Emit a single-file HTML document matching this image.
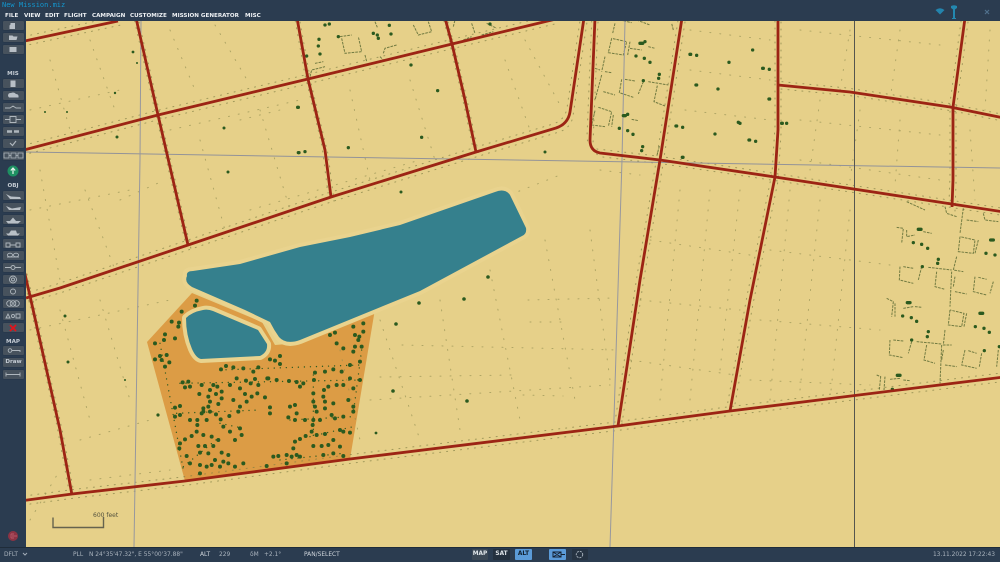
<!DOCTYPE html>
<html><head><meta charset="utf-8"><title>New Mission.miz</title>
<style>
html,body{margin:0;padding:0;width:1000px;height:562px;overflow:hidden;background:#e6d089}
body{position:relative;font-family:"DejaVu Sans","Liberation Sans",sans-serif}
#map{position:absolute;left:0;top:0}
.bar{position:absolute;background:#2b3c50}
.t{position:absolute;white-space:nowrap;line-height:8px}
.m{top:12px;font-size:5.6px;font-weight:bold;color:#eef1f4}
.s{top:551px;font-size:5.9px;color:#aab3bd}
.b{position:absolute;left:3px;width:21px;height:9px;background:#47525d;border-radius:1px;box-shadow:0 0 1px #1f2c3a}
.l{position:absolute;left:0;width:26px;text-align:center;font-size:5.6px;font-weight:bold;color:#c5ccd4;line-height:8px}
.g{position:absolute;top:549px;height:11px;border-radius:1px;font-size:5.8px;font-weight:bold;color:#dfe4e8;text-align:center;line-height:11px;background:#3b4855}
</style></head><body>
<svg id="map" width="1000" height="562" viewBox="0 0 1000 562">
<defs>
<g id="roads" fill="none">
<path d="M20 42L118 21"/>
<path d="M136 18L158 115L188 245"/>
<path d="M20 151L158 115L308 79L452 44L556 19"/>
<path d="M297 18L308 79L325 150L331 197"/>
<path d="M445 18L452 44L465 100L476 152"/>
<path d="M26 298L60 288L188 245L331 197L476 152L556 128Q568 124 570 112L584 18"/>
<path d="M24 270L30 296L60 430L72 495"/>
<path d="M20 501L72 494L185 481L350 459L618 426L730 411L1004 377"/>
<path d="M595 18L590 140Q590 151 600 153L660 160L775 177L1004 212"/>
<path d="M682 18L660 160L640 280L618 426"/>
<path d="M778 18L778 130L775 177L750 300L730 411"/>
<path d="M778 85L850 92L950 107L1004 118"/>
<path d="M965 18L953 107L953 180L952 207"/>
</g>
</defs>
<rect width="1000" height="562" fill="#e6d089"/>
<path d="M192 293L147 342L185 481L350 459L375 309L300 343L275 345L262 322Z" fill="#dc9c45"/>
<!-- roadside dots -->
<g stroke="#7b7b42" stroke-width="1" stroke-dasharray="1 6" stroke-linecap="round" opacity=".65">
<use href="#roads" transform="translate(-3,-4)"/>
<use href="#roads" transform="translate(3,4)"/>
</g>
<!-- scattered dotted lanes -->
<g fill="none" stroke="#8b8a4e" stroke-width="1" stroke-dasharray="1 9" stroke-linecap="round" opacity=".6">
<path d="M50 60L70 130M90 40L115 110M170 30L195 90M215 25L250 85M40 170L60 280M85 190L115 270M120 200L165 180M200 140L225 230M260 110L290 210M350 90L370 180M410 80L435 160M505 60L530 130M525 40L560 105"/>
<path d="M60 310L90 420M100 300L130 400M30 330L170 300M80 440L150 420M90 480L170 470M340 350L360 440M380 320L420 440M440 300L460 430M490 270L520 420M545 240L575 400M590 230L610 380M528 300L613 298M380 377L513 375M530 322L570 322M523 395L563 396M402 345L620 350M370 400L610 385"/>
<path d="M370 250L560 175M250 210L420 160M600 170L640 175M680 190L660 400M710 190L690 400M740 190L720 370M650 240L750 255M640 300L740 310M630 360L735 375M790 190L770 400M820 200L800 390M850 210L830 400M770 250L890 265M760 320L880 330M750 380L870 385"/>
<path d="M690 30L770 40M690 70L770 80M685 110L770 120M800 30L940 45M800 120L940 135M800 160L940 180M850 30L840 90M900 30L890 100M990 30L985 110M970 130L975 200M820 100L810 170M860 110L850 180M900 120L895 185"/>
<path d="M30 520L60 470M240 120L280 110M30 210L130 190M30 110L120 90M170 130L300 100"/>
</g>
<!-- compound walls (right block) -->
<g transform="translate(860,190) scale(.3333)" fill="none" stroke="#55652f" stroke-width="3" stroke-dasharray="8 3" opacity=".8">
<path d="M140 35L195 60M255 50L260 70L290 80M310 55L300 130M320 90L355 95M370 70L375 90L415 95M110 112L130 115L125 160M140 120L140 140L165 135M190 125L215 130M300 140L295 185L340 190L345 150L300 140M355 150L345 190M120 230L118 270L160 280M130 230L160 235M185 230L175 270M205 232L275 240M230 245L225 290L255 298M290 200L280 240L310 245M275 245L270 350M285 260L280 290M285 305L320 312M345 260L340 305L380 315M355 262L380 268M400 275L390 310M80 325L100 335L95 380M105 340L105 380M130 355L160 350M165 350L185 352M270 360L265 405L305 410L312 370L270 360M320 370L312 410M90 450L88 495L130 503M100 450L130 453M155 455L145 490M170 455L245 462M200 465L192 510L225 520M255 420L250 465L275 465M245 465L240 580M250 480L245 510M255 525L290 530M315 480L305 525L350 535M325 482L350 490M365 490L358 530M415 480L410 530M50 555L62 560L58 600M75 560L72 600M90 568L120 565M130 570L150 572"/>
</g>
<g transform="translate(580,20) scale(.3333)" fill="none" stroke="#55652f" stroke-width="3" stroke-dasharray="8 3" opacity=".8">
<path d="M105 10L98 40M120 0L155 8M170 0L210 15M95 55L85 98L130 105L140 65L95 55M150 65L143 105M150 85L185 90M205 80L225 85M75 110L65 155M45 145L60 150M75 155L95 158M65 165L45 240M70 215L105 225M125 178L118 218L160 232M135 178L165 183M190 185L175 222M205 185L265 195M232 197L222 245L255 258M55 262L95 275L85 320M45 272L35 315L75 320M100 285L95 320M155 298L175 302M238 378L230 410M280 30L275 10"/>
</g>
<g transform="translate(290,20) scale(.3333)" fill="none" stroke="#55652f" stroke-width="3" stroke-dasharray="8 3" opacity=".8">
<path d="M150 50L185 45M155 55L165 100L215 95L205 50M60 170L65 150L105 140M75 130L100 125M225 105L230 125M280 100L285 85L320 75M270 110L280 120M370 15L385 45L425 35L415 5M410 90L380 95M520 60L545 50M490 20L495 0M545 10L555 40M575 45L610 35M590 10L620 25M255 5L262 22"/>
</g>
<!-- thin grid -->
<g fill="none" stroke-width="1">
<path d="M26 152L1000 168" stroke="#939398"/>
<path d="M625 21L622 160L610 547" stroke="#97979e"/>
<path d="M141 21L140 160L134 547" stroke="#97979e"/>
<path d="M854.5 21V547" stroke="#55554f"/>
</g>
<!-- lakes -->
<path d="M187 275Q186 271 193 271L240 264L300 247L350 237L400 225L495 192Q505 188 510 195L526 228Q527 234 522 236L420 291L300 340Q286 345 279 337Q274 330 270 322L245 310L192 287Q184 282 187 275Z" fill="#35808d" stroke="#e9d38e" stroke-width="8" stroke-linejoin="round"/>
<path d="M187 276Q186 271 193 271L240 264L300 247L350 237L400 225L495 192Q505 188 510 195L526 228Q527 234 522 236L420 291L300 340Q286 345 279 337Q274 330 270 322L245 310L192 287Q184 282 187 276Z" fill="#35808d"/>
<path d="M186 318Q192 312 203 310Q208 309 213 311L258 330L267 344Q268 352 260 356L201 359Q196 358 192 349Q186 335 186 318Z" fill="#35808d" stroke="#e9d38e" stroke-width="8" stroke-linejoin="round"/>
<path d="M186 318Q192 312 203 310Q208 309 213 311L258 330L267 344Q268 352 260 356L201 359Q196 358 192 349Q186 335 186 318Z" fill="#35808d"/>
<!-- orchard trees -->
<g transform="translate(140,280) scale(.3333)" fill="none" stroke="#2b5a1f" stroke-width="12" stroke-linecap="round">
<path d="M165 77h0M170 62h0M125 95h0M95 125h0M117 128h0M115 140h0M72 180h0M105 175h0M45 190h0M75 163h0M45 238h0M60 228h0M80 225h0M65 240h0M88 247h0M75 260h0M258 258h0M243 268h0M280 262h0M310 265h0M355 262h0M390 238h0M420 228h0M405 242h0M420 252h0M340 275h0M385 295h0M410 300h0M447 303h0M470 306h0M490 310h0M480 320h0M525 278h0M522 300h0M555 275h0M580 268h0M605 275h0M630 255h0M660 245h0M640 215h0M645 200h0M665 200h0M640 140h0M670 130h0M655 180h0M658 170h0M645 165h0M670 155h0M570 165h0M585 158h0M590 190h0M610 205h0"/>
<path d="M128 307h0M145 305h0M135 322h0M150 320h0M185 315h0M220 315h0M232 320h0M210 330h0M178 342h0M205 350h0M228 342h0M245 335h0M270 315h0M290 295h0M318 302h0M332 310h0M345 297h0M355 315h0M300 325h0M315 342h0M335 350h0M352 340h0M375 352h0M382 295h0M280 360h0M245 355h0M210 365h0M190 385h0M185 400h0M105 383h0M120 378h0M105 410h0M120 405h0M150 420h0M172 420h0M200 420h0M172 435h0M228 403h0M242 418h0M268 408h0M300 380h0M320 365h0M295 395h0M390 382h0M450 380h0M465 375h0M445 412h0M470 400h0M390 400h0M205 380h0M210 395h0M235 372h0M190 395h0"/>
<path d="M520 340h0M552 330h0M550 350h0M525 380h0M520 365h0M555 365h0M580 370h0M565 320h0M590 315h0M610 315h0M640 325h0M660 300h0M630 295h0M625 360h0M640 380h0M575 405h0M585 415h0M610 410h0M640 395h0M520 420h0M518 435h0M540 420h0M495 420h0M465 420h0M530 395h0M555 385h0"/>
<path d="M170 455h0M155 468h0M135 478h0M120 490h0M118 505h0M175 498h0M195 498h0M220 498h0M235 480h0M190 465h0M215 470h0M140 528h0M180 518h0M205 520h0M245 518h0M265 525h0M225 540h0M250 545h0M180 555h0M200 560h0M215 555h0M150 550h0M180 580h0M240 560h0M285 560h0M310 550h0M265 550h0M300 445h0M270 455h0M305 465h0M250 440h0M285 480h0M515 455h0M530 465h0M497 468h0M480 477h0M465 485h0M520 498h0M545 498h0M565 495h0M580 480h0M460 505h0M470 525h0M440 525h0M455 530h0M480 530h0M415 528h0M400 530h0M440 550h0M380 558h0M550 525h0M580 520h0M610 528h0M600 450h0M610 455h0M630 458h0M555 462h0M600 500h0"/>
<g stroke-width="4" stroke-dasharray="0.1 18"><path d="M240 270L660 255M120 310L670 300M110 400L360 390M450 420L640 410M240 430L310 445M510 470L640 440M130 560L240 470M420 540L610 520M665 210L640 400M60 190L130 570M520 285L520 470"/></g>
</g>
<!-- isolated trees -->
<g transform="translate(860,190) scale(.3333)" fill="none" stroke="#2b5a1f" stroke-width="10" stroke-linecap="round">
<path d="M175 118h8M392 150h8M160 158h0M185 163h0M203 175h0M378 190h0M405 195h0M235 208h0M233 220h0M187 230h0M142 338h8M128 378h0M154 383h0M170 394h0M360 370h8M346 410h0M372 415h0M388 427h0M205 425h0M202 440h0M155 450h0M373 482h0M112 556h8M97 598h0M418 470h0"/>
</g>
<g transform="translate(580,20) scale(.3333)" fill="none" stroke="#2b5a1f" stroke-width="10" stroke-linecap="round">
<path d="M180 70h8M195 65h0M168 108h0M193 115h0M210 127h0M330 103h2M350 106h0M447 127h0M548 145h2M568 148h0M348 195h2M238 163h0M236 175h0M190 182h0M567 237h2M130 287h6M143 283h0M118 325h0M143 332h0M159 343h0M288 318h2M308 322h0M405 342h0M507 360h2M527 364h0M605 310h2M307 412h2M188 380h0M185 392h0M518 90h0M475 307h0M480 310h0M414 207h0M620 310h0"/>
</g>
<g transform="translate(290,20) scale(.3333)" fill="none" stroke="#2b5a1f" stroke-width="10" stroke-linecap="round">
<path d="M105 15h0M118 12h0M145 50h0M87 58h0M85 78h0M90 102h0M50 108h0M250 40h0M262 45h0M265 55h0M303 42h0M298 16h0M23 262h2M363 135h0M443 212h0M395 352h0M175 383h0M25 398h2M45 395h0M600 12h0"/>
</g>
<g fill="#2b5a1f">
<circle cx="133" cy="52" r="1.400"/><circle cx="224" cy="128" r="1.500"/><circle cx="228" cy="172" r="1.500"/><circle cx="65" cy="316" r="1.500"/><circle cx="68" cy="362" r="1.500"/><circle cx="117" cy="137" r="1.500"/><circle cx="401" cy="192" r="1.500"/><circle cx="545" cy="152" r="1.500"/><circle cx="488" cy="277" r="1.800"/><circle cx="419" cy="303" r="1.800"/><circle cx="464" cy="299" r="1.800"/><circle cx="396" cy="324" r="1.800"/><circle cx="393" cy="391" r="1.800"/><circle cx="467" cy="401" r="1.800"/><circle cx="158" cy="415" r="1.600"/><circle cx="376" cy="433" r="1.400"/><circle cx="125" cy="380" r="1"/>
<circle cx="67" cy="112" r="1"/><circle cx="45" cy="112" r="1"/><circle cx="137" cy="63" r="1"/><circle cx="115" cy="93" r="1.200"/></g>
<!-- roads -->
<use href="#roads" stroke="#9c2414" stroke-width="2.800" stroke-linejoin="round"/>
<!-- scale -->
<path d="M53 517.500V527.500H103.500V517" fill="none" stroke="#66634e" stroke-width="1.400"/>
<text x="93" y="517" font-family="DejaVu Sans,sans-serif" font-size="6" fill="#55533f">600 feet</text>
</svg>

<div class="bar" style="left:0;top:0;width:1000px;height:21px"></div>
<div class="bar" style="left:0;top:21px;width:26px;height:526px"></div>
<div class="bar" style="left:0;top:547px;width:1000px;height:15px;border-top:1px solid #1f2c3a;box-sizing:border-box"></div>

<div class="t" style="left:2px;top:1px;font:7px/9px 'DejaVu Sans Mono','Liberation Mono',monospace;color:#1496cd">New Mission.miz</div>
<div class="t m" style="left:5px">FILE</div>
<div class="t m" style="left:24px">VIEW</div>
<div class="t m" style="left:45px">EDIT</div>
<div class="t m" style="left:64px">FLIGHT</div>
<div class="t m" style="left:92px">CAMPAIGN</div>
<div class="t m" style="left:130px">CUSTOMIZE</div>
<div class="t m" style="left:172px">MISSION GENERATOR</div>
<div class="t m" style="left:245px">MISC</div>

<svg style="position:absolute;left:930px;top:3px" width="60" height="17" viewBox="0 0 60 17">
<path d="M5.500 7Q10 3.500 14.500 7L10 11.500Z" fill="#2384ad"/>
<path d="M21 3Q24 1.500 27 3L27 5Q25.500 6 25 6.500V15H26V16H22V15H23V6.500Q22.500 6 21 5Z" fill="#2388b0"/>
<path d="M55 7L59 11M59 7L55 11" stroke="#50708c" stroke-width="1.200" fill="none"/>
</svg>

<div class="b" style="top:21px"></div><div class="b" style="top:33px"></div><div class="b" style="top:45px"></div>
<div class="l" style="top:70px">MIS</div>
<div class="b" style="top:79px"></div><div class="b" style="top:91px"></div><div class="b" style="top:103px"></div><div class="b" style="top:115px"></div><div class="b" style="top:127px"></div><div class="b" style="top:139px"></div><div class="b" style="top:151px"></div>
<div class="l" style="top:182px">OBJ</div>
<div class="b" style="top:191px"></div><div class="b" style="top:203px"></div><div class="b" style="top:215px"></div><div class="b" style="top:227px"></div><div class="b" style="top:239px"></div><div class="b" style="top:251px"></div><div class="b" style="top:263px"></div><div class="b" style="top:275px"></div><div class="b" style="top:287px"></div><div class="b" style="top:299px"></div><div class="b" style="top:311px"></div><div class="b" style="top:323px"></div>
<div class="l" style="top:338px">MAP</div>
<div class="b" style="top:346px"></div>
<div class="b" style="top:358px;font-size:5.600px;font-weight:bold;color:#c5ccd4;text-align:center;line-height:9px">Draw</div>
<div class="b" style="top:370px"></div>

<svg style="position:absolute;left:0;top:21px" width="26" height="520" viewBox="0 21 26 520">
<g fill="#b8bfc6">
<path d="M10.500 23H15V29H9.500V25.500L10.500 24.500Z"/><path d="M9 35.500H12.500L13.500 36.500H17.500L16.500 40H9Z"/><path d="M9.500 47H16.500V52H9.500Z"/><path d="M10.500 80.500H15.500V87H10.500Z"/>
<path d="M8 96Q8 92.500 11 93Q14 91.500 16 94Q19 94 18.500 97.500H9Z"/>
</g>
<g fill="none" stroke="#aeb6bd" stroke-width=".9">
<path d="M5 108H10L13 106L16 108H21"/>
<path d="M5 119.500H10M16 119.500H21M10 116.500H16V122.500H10Z"/>
<path d="M7 131.500H12M14 131.500H19" stroke-width="2.500"/>
<path d="M10 143L12.500 145.500L16 141" stroke-width="1.200"/>
<path d="M4 153H9V158H4ZM11 153H16V158H11ZM18 153H23V158H18ZM9 155.500H11M16 155.500H18" stroke-width=".8"/>
<path d="M6 243H10V247H6ZM16 243H20V247H16ZM10 245H16"/>
<path d="M7 257H19"/><ellipse cx="10" cy="255" rx="2.500" ry="1.800"/><ellipse cx="16" cy="255" rx="2.500" ry="1.800"/>
<path d="M5 267.500H11M15 267.500H21"/><circle cx="13" cy="267.500" r="2"/>
<circle cx="13" cy="279.500" r="3.500"/><circle cx="13" cy="279.500" r="1.500"/><circle cx="13" cy="291.500" r="2.500"/>
<circle cx="9.500" cy="303.500" r="2.800"/><circle cx="13" cy="303.500" r="2.800"/><circle cx="16.500" cy="303.500" r="2.800"/>
<path d="M6 318L8 314L10 318Z"/><circle cx="13" cy="316" r="1.500"/><path d="M16 314H20V318H16Z"/>
<circle cx="10" cy="350.500" r="1.800"/><path d="M12 350.500H20V352"/>
<path d="M6 374.500H20M6 372.500V376.500M20 372.500V376.500"/>
</g>
<g fill="#b8bfc6">
<path d="M6 194L11 196.500L20 197L21 199L10 199Z"/><path d="M6 206L12 208.500L21 207L20 210H9Z"/><path d="M6 221H21L18 223.500H8ZM10 221L13 217.500L16 221Z"/><path d="M6 233.500H20L18 235.500H8ZM9 233.500L11 230.500H16L17 233.500Z"/>
</g>
<path d="M10 325L16 331M16 325L10 331" stroke="#e0141c" stroke-width="1.800" fill="none"/>
<circle cx="13" cy="171" r="5.500" fill="#1e9062"/>
<path d="M13 174V168.500M10.800 170.500L13 168L15.200 170.500" stroke="#e8f4ee" stroke-width="1.200" fill="none"/>
<circle cx="13" cy="536" r="5" fill="#8e3344"/>
<path d="M11 534H14M11 538H14M11 534V538M12 536H17" stroke="#b85868" stroke-width=".9" fill="none"/>
</svg>

<div class="t s" style="left:4px">DFLT</div>
<svg style="position:absolute;left:22px;top:552px" width="6" height="5"><path d="M1 1L3 3L5 1" stroke="#a3adb8" fill="none"/></svg>
<div class="t s" style="left:73px">PLL</div>
<div class="t s" style="left:89px">N 24°35'47.32", E 55°00'37.88"</div>
<div class="t s" style="left:200px;color:#d0d6dc">ALT</div>
<div class="t s" style="left:219px">229</div>
<div class="t s" style="left:250px">δM</div>
<div class="t s" style="left:264px">+2.1°</div>
<div class="t s" style="left:304px;color:#d0d6dc">PAN/SELECT</div>
<div class="t s" style="right:5px">13.11.2022 17:22:43</div>

<div class="g" style="left:472px;width:16px">MAP</div>
<div class="g" style="left:493px;width:17px;background:#24303e">SAT</div>
<div class="g" style="left:515px;width:17px;background:#5b9bd8;color:#102030">ALT</div>
<div class="g" style="left:549px;width:17px;background:#5b9bd8"></div>
<div class="g" style="left:572px;width:16px;background:#263342"></div>
<svg style="position:absolute;left:549px;top:549px" width="40" height="11" viewBox="0 0 40 11">
<path d="M4 3H12V8H4ZM4 3L12 8M12 3L4 8M12 5.500H16" stroke="#142232" fill="none"/>
<circle cx="30.500" cy="5.500" r="3.200" stroke="#a3adb8" fill="none" stroke-dasharray="2 1"/>
</svg>
</body></html>
